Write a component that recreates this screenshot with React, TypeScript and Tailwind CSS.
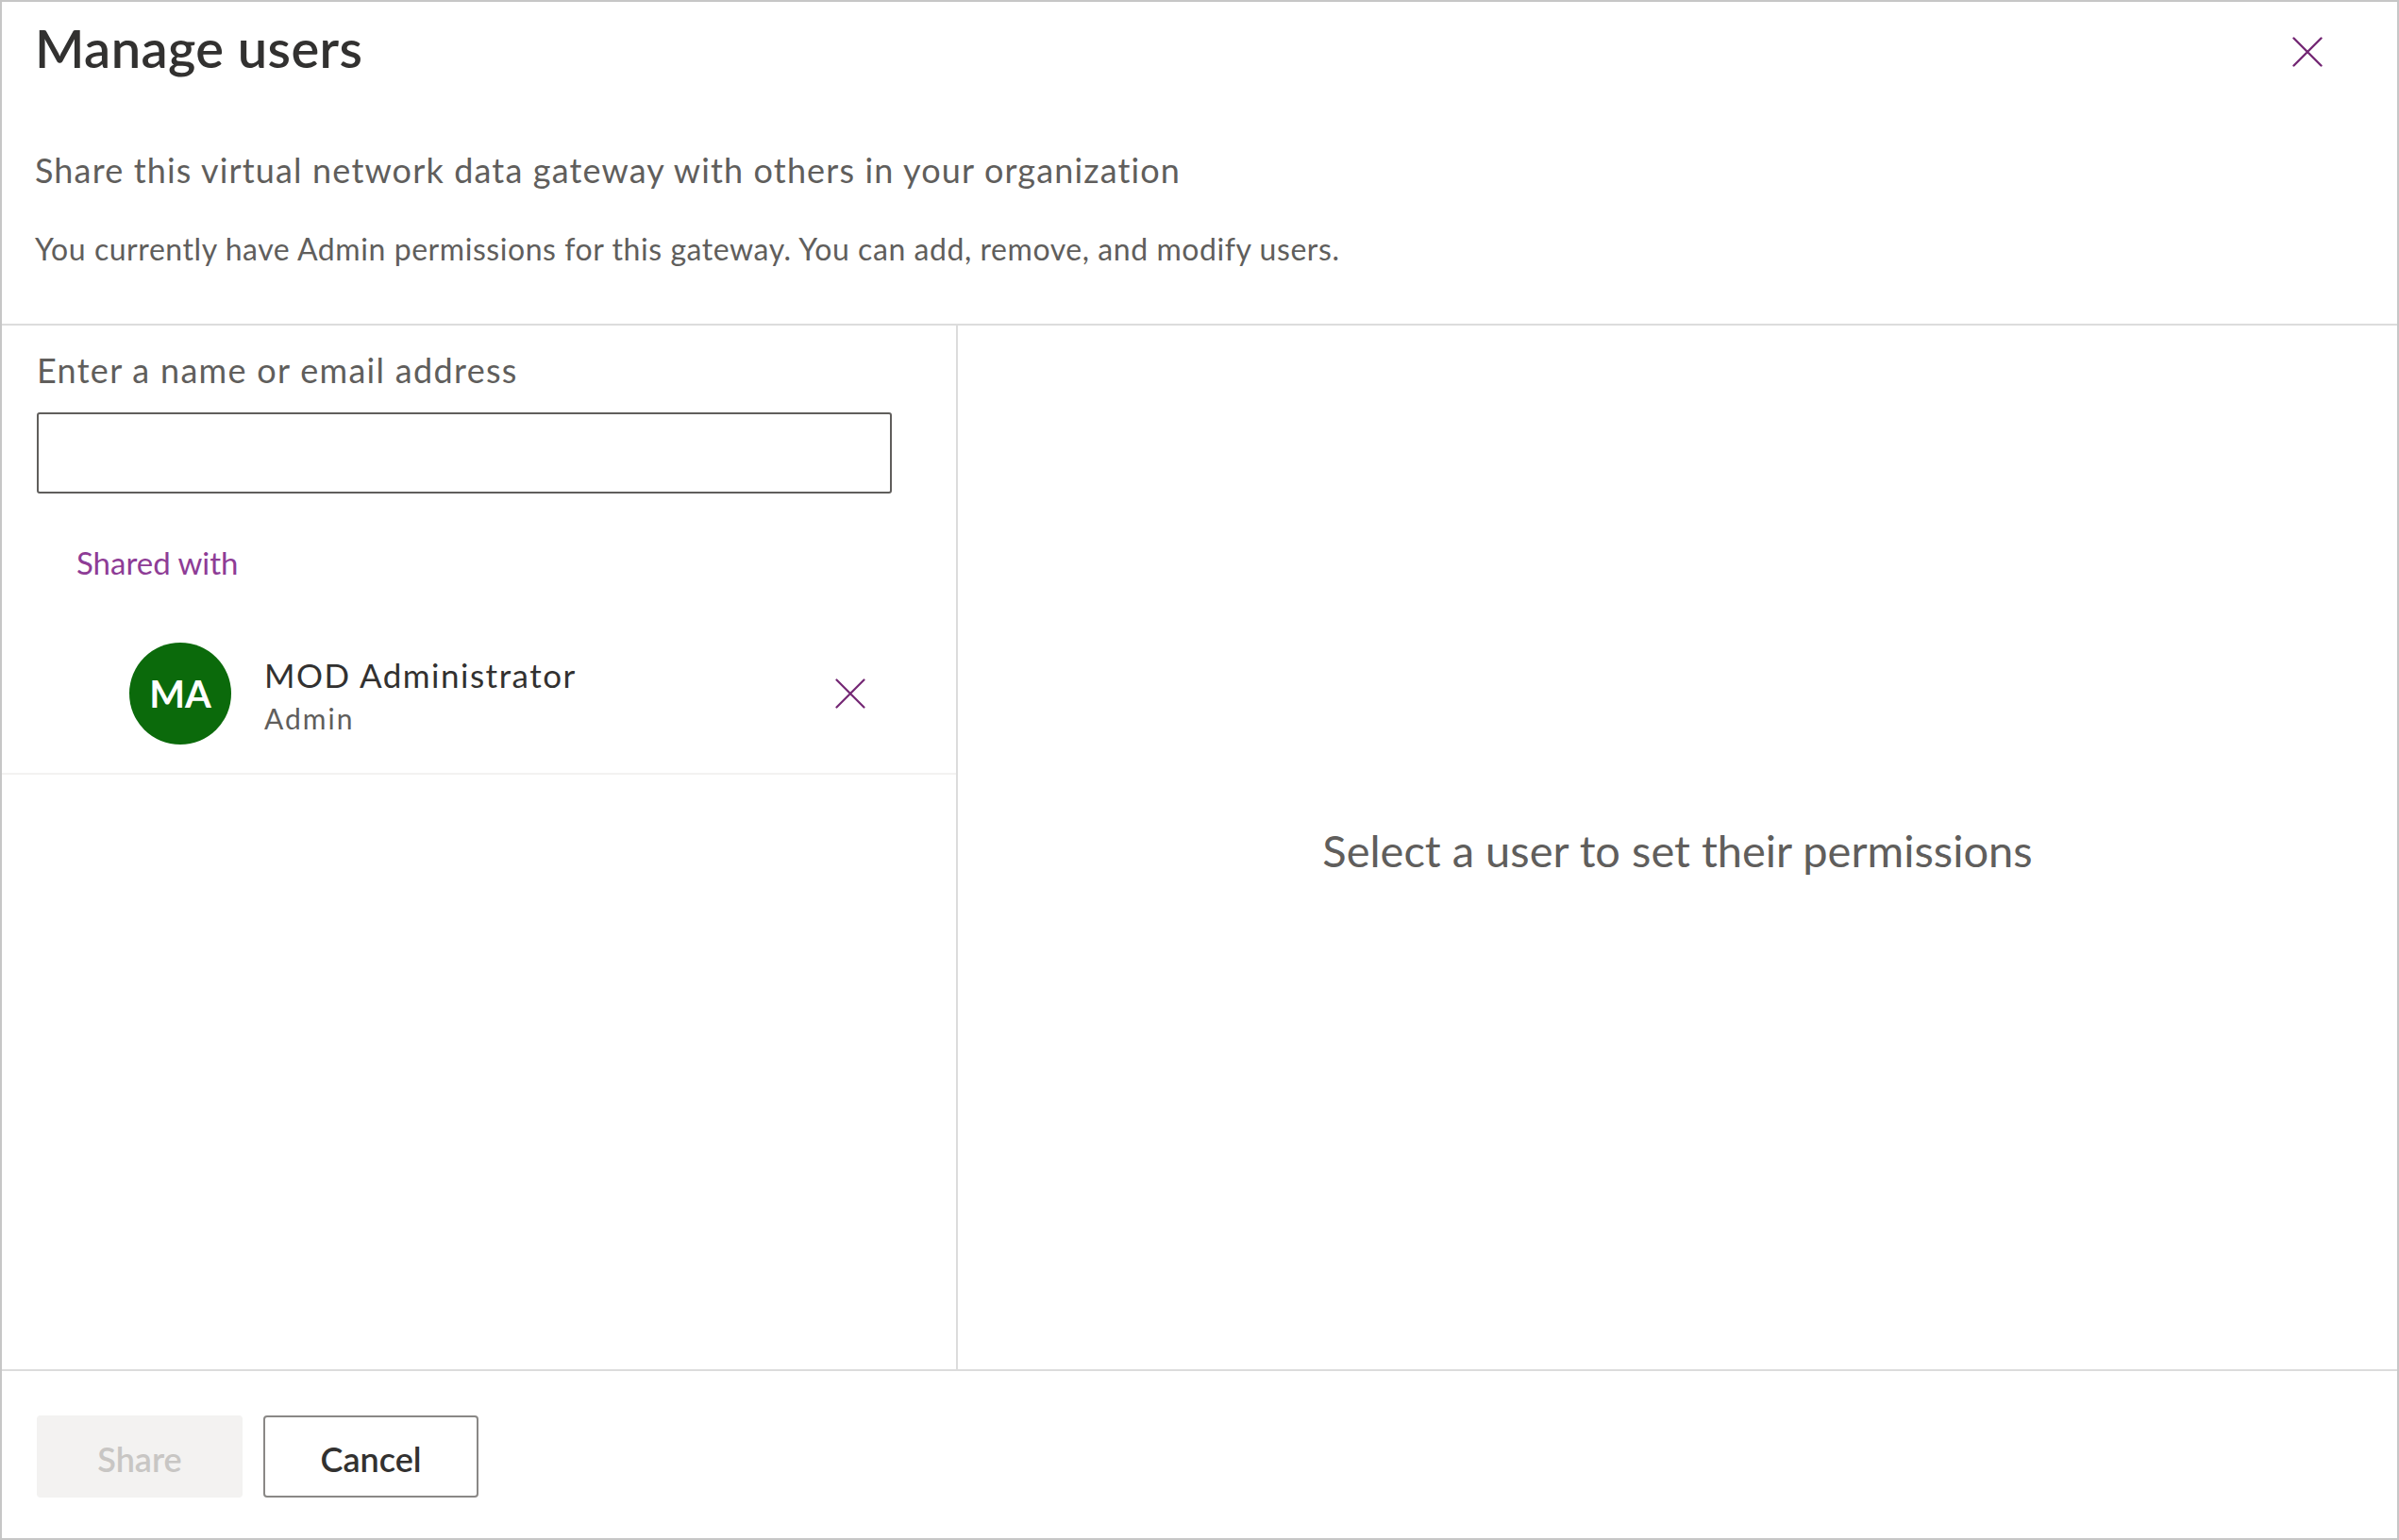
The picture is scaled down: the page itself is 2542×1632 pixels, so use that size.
import { type ReactNode } from "react";

type CrossIconProps = {
  size: number;
  strokeWidth?: number;
  className?: string;
};

function CrossIcon({ size, strokeWidth = 2.4, className }: CrossIconProps) {
  return (
    <svg
      width={size}
      height={size}
      viewBox="0 0 32 32"
      fill="none"
      className={className}
      aria-hidden="true"
    >
      <path
        d="M1.5 1.5L30.5 30.5M30.5 1.5L1.5 30.5"
        stroke="#742774"
        strokeWidth={strokeWidth}
        strokeLinecap="round"
      />
    </svg>
  );
}

type SharedUser = {
  initials: string;
  name: string;
  role: string;
};

const sharedUsers: SharedUser[] = [{ initials: "MA", name: "MOD Administrator", role: "Admin" }];

function SharedUserRow({ user }: { user: SharedUser }) {
  return (
    <div className="flex h-[171px] items-center border-b-2 border-[#f3f2f1] pl-[135px] pr-[96px]">
      <div className="flex h-[108px] w-[108px] shrink-0 items-center justify-center rounded-full bg-[#0b6a0b]">
        <span className="text-[40px] leading-[48px] font-bold text-white">{user.initials}</span>
      </div>
      <div className="ml-[35px] flex flex-1 flex-col pt-[3px]">
        <span className="text-[35px] leading-[42px] tracking-[1.5px] text-[#323130]">{user.name}</span>
        <span className="mt-[7px] text-[30px] leading-[36px] tracking-[2px] text-[#605e5c]">{user.role}</span>
      </div>
      <button type="button" aria-label={`Remove ${user.name}`} className="flex">
        <CrossIcon size={32} strokeWidth={2.2} />
      </button>
    </div>
  );
}

function FooterButton({ children, disabled }: { children: ReactNode; disabled?: boolean }) {
  const className = disabled
    ? "h-[87px] w-[218px] rounded-[4px] bg-[#f3f2f1] pt-[4px] text-[36px] font-semibold text-[#c8c6c4]"
    : "h-[87px] w-[228px] rounded-[4px] border-2 border-[#8a8886] bg-white pt-[4px] text-[36px] font-semibold text-[#323130]";
  return (
    <button type="button" disabled={disabled} className={className}>
      {children}
    </button>
  );
}

export default function App() {
  return (
    <div className="flex h-[1632px] w-[2542px] flex-col border-2 border-[#c6c6c6] bg-white font-['Lato','Noto_Sans',sans-serif]">
      <header className="h-[343px] shrink-0 border-b-2 border-[#dcdcdc] pl-[35px]">
        <div className="flex items-start justify-between pt-[15px] pr-[79px]">
          <h1 className="text-[56px] leading-[68px] font-semibold tracking-[0.4px] text-[#323130]">
            Manage users
          </h1>
          <button type="button" aria-label="Close" className="mt-[22px] flex">
            <CrossIcon size={32} />
          </button>
        </div>
        <p className="mt-[73px] text-[36px] leading-[44px] tracking-[1.15px] text-[#605e5c]">
          Share this virtual network data gateway with others in your organization
        </p>
        <p className="mt-[42px] text-[32px] leading-[40px] tracking-[0.56px] text-[#605e5c]">
          You currently have Admin permissions for this gateway. You can add, remove, and modify users.
        </p>
      </header>

      <div className="flex min-h-0 flex-1">
        <section className="w-[1013px] shrink-0 border-r-2 border-[#dcdcdc] pt-[25px]">
          <div className="pl-[37px]">
            <label
              htmlFor="user-search"
              className="block text-[36px] leading-[44px] tracking-[1.3px] text-[#605e5c]"
            >
              Enter a name or email address
            </label>
            <input
              id="user-search"
              type="text"
              className="mt-[23px] block h-[86px] w-[906px] rounded-[3px] border-2 border-[#605e5c] bg-white px-4 text-[32px] outline-none"
            />
          </div>
          <p className="mt-[53px] pl-[79px] text-[33px] leading-[40px] text-[#8e3c96]">Shared with</p>
          <div className="mt-[34px]">
            {sharedUsers.map((user) => (
              <SharedUserRow key={user.name} user={user} />
            ))}
          </div>
        </section>

        <section className="flex flex-1 items-center justify-center">
          <p className="mt-[5px] text-[47px] leading-[56px] text-[#605e5c]">
            Select a user to set their permissions
          </p>
        </section>
      </div>

      <footer className="flex h-[179px] shrink-0 items-start gap-[22px] border-t-2 border-[#dcdcdc] pt-[47px] pl-[37px]">
        <FooterButton disabled>Share</FooterButton>
        <FooterButton>Cancel</FooterButton>
      </footer>
    </div>
  );
}
